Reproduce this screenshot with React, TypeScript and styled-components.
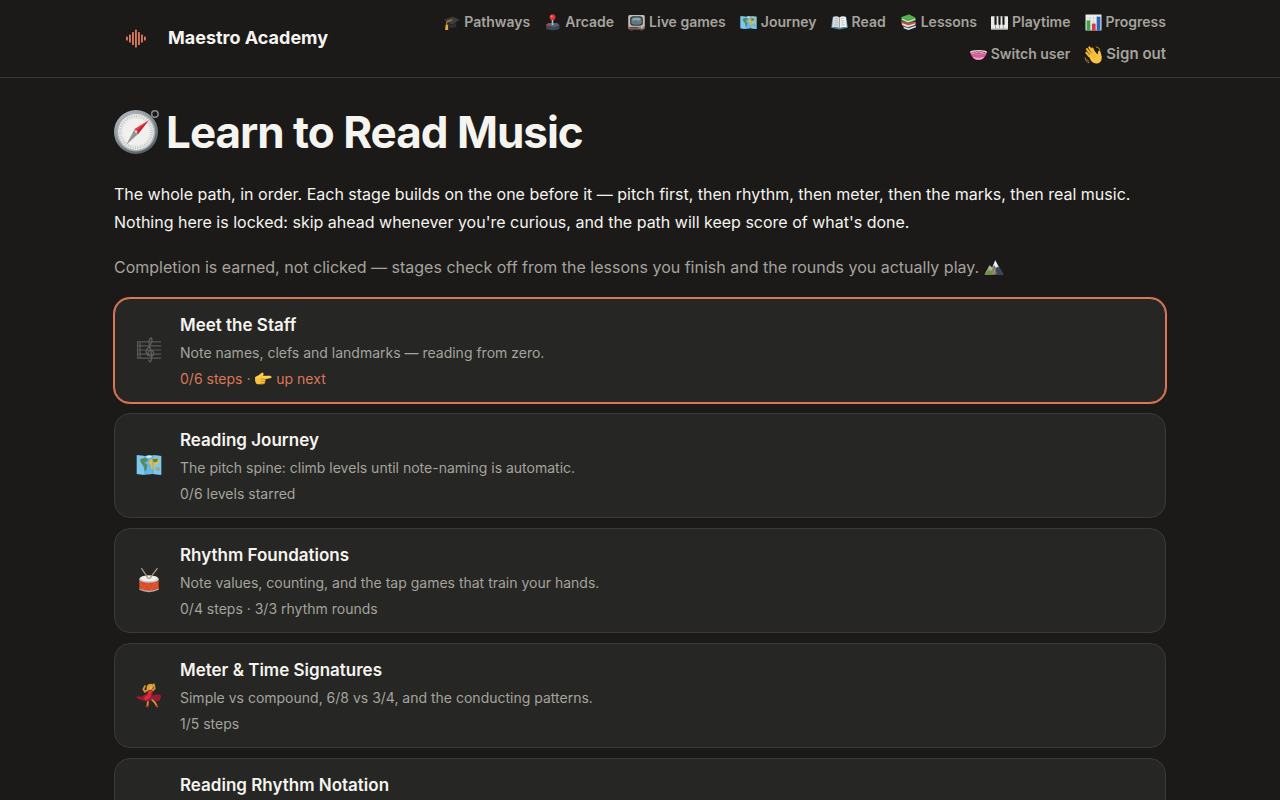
import type { ReactNode } from "react";
import styled, { createGlobalStyle } from "styled-components";

const GlobalStyle = createGlobalStyle`
  *, *::before, *::after { box-sizing: border-box; }
  body {
    margin: 0;
    background: #1b1a19;
    color: #f5f4ef;
    font-family: Inter, "Liberation Sans", sans-serif;
    font-size: 16px;
    line-height: 28px;
  }
  h1, h2, p, ul { margin: 0; padding: 0; }
  ul { list-style: none; }
`;

const Header = styled.header`
  border-bottom: 1px solid #3b3a38;
`;

const HeaderInner = styled.div`
  display: flex;
  align-items: center;
  justify-content: space-between;
  gap: 24px;
  max-width: 1100px;
  margin: 0 auto;
  padding: 6px 24px 7px;
`;

const Brand = styled.a`
  display: flex;
  align-items: center;
  flex-shrink: 0;
  gap: 10px;
  color: inherit;
  font-size: 18px;
  font-weight: 700;
  text-decoration: none;
`;

const Nav = styled.nav`
  display: flex;
  flex-wrap: wrap;
  justify-content: flex-end;
  column-gap: 14px;
`;

const NavLink = styled.a`
  display: flex;
  align-items: center;
  gap: 4px;
  color: #a5a39c;
  font-size: 14px;
  font-weight: 600;
  line-height: 32px;
  text-decoration: none;
`;

const NavButton = styled.button`
  display: flex;
  align-items: center;
  gap: 3px;
  padding: 0;
  border: 0;
  background: none;
  color: #a5a39c;
  font-family: inherit;
  font-size: 15px;
  font-weight: 600;
  line-height: 32px;
  cursor: pointer;
`;

const Main = styled.main`
  max-width: 1100px;
  margin: 0 auto;
  padding: 28px 24px 48px;
`;

const Title = styled.h1`
  display: flex;
  align-items: center;
  gap: 7px;
  margin-bottom: 22px;
  font-size: 44px;
  font-weight: 700;
  line-height: 52px;
  letter-spacing: -1px;
`;

const Lead = styled.p`
  margin-bottom: 17px;
`;

const Note = styled.p`
  margin-bottom: 17px;
  color: #a5a39c;
`;

const StageList = styled.ul`
  display: flex;
  flex-direction: column;
  gap: 10px;
`;

const StageCard = styled.a<{ $next?: boolean }>`
  display: flex;
  align-items: center;
  gap: 17px;
  min-height: 105px;
  padding: 12px 20px 11px;
  border: 1px solid ${(p) => (p.$next ? "#d97757" : "#3b3a38")};
  border-radius: 16px;
  box-shadow: ${(p) => (p.$next ? "0 0 0 1px #d97757" : "none")};
  background: #262624;
  color: inherit;
  text-decoration: none;
`;

const StageIcon = styled.span`
  display: flex;
  justify-content: center;
  width: 28px;
  padding-bottom: 2px;
`;

const StageBody = styled.div`
  display: flex;
  flex: 1;
  flex-direction: column;
  align-self: flex-start;
  gap: 2px;
`;

const StageTitle = styled.h2`
  font-size: 17px;
  font-weight: 600;
  line-height: 28px;
`;

const StageText = styled.p<{ $accent?: boolean }>`
  color: ${(p) => (p.$accent ? "#d97757" : "#a5a39c")};
  font-size: 14px;
  line-height: 24px;
`;

const Glyph = styled.svg`
  flex-shrink: 0;
`;

const InlineGlyph = styled(Glyph)`
  vertical-align: text-bottom;
`;

type IconProps = { size: number };

function Logo() {
  const bars = [4, 8, 13, 18, 13, 8, 4];
  return (
    <Glyph width="44" height="44" viewBox="0 0 44 44" aria-hidden="true">
      {bars.map((h, i) => (
        <rect key={i} x={12 + i * 3} y={22.5 - h / 2} width="1.9" height={h} rx="0.6" fill="#d97757" />
      ))}
    </Glyph>
  );
}

function Cap({ size }: IconProps) {
  return (
    <Glyph width={size} height={size} viewBox="0 0 32 32" aria-hidden="true">
      <path d="M8 15v9q8 5 17 0v-9z" fill="#30302f" />
      <path d="M2 11 18 5l13 6-15 9z" fill="#3f3f3d" />
      <path d="m2 11 14 9 15-9v1.500L16 22 2 12.500z" fill="#242423" />
      <path d="m17 11-10 4v7" fill="none" stroke="#b98424" strokeWidth="2" />
      <path d="M5 20h4l1 10H4z" fill="#e8a83b" />
    </Glyph>
  );
}

function Joystick({ size }: IconProps) {
  return (
    <Glyph width={size} height={size} viewBox="0 0 32 32" aria-hidden="true">
      <path d="M4 20 8 17h17l4 4v7q-12 5-25 0z" fill="#3d4654" />
      <path d="M4 20 8 17h17l4 4-12 4z" fill="#56606f" />
      <path d="M14.500 9h3v12h-3z" fill="#b9bdc2" />
      <circle cx="16" cy="6" r="5.500" fill="#e1323d" />
      <circle cx="14.500" cy="4.500" r="1.800" fill="#ff8d8d" />
      <ellipse cx="8" cy="20.500" rx="3" ry="1.600" fill="#d8343c" />
    </Glyph>
  );
}

function Television({ size }: IconProps) {
  return (
    <Glyph width={size} height={size} viewBox="0 0 32 32" aria-hidden="true">
      <rect x="0" y="2" width="32" height="27" rx="3" fill="#8b7567" />
      <rect x="1" y="2" width="30" height="22" rx="3" fill="#c2beb8" />
      <rect x="4" y="4" width="24" height="18" rx="6" fill="#303a3d" />
      <rect x="6" y="6" width="20" height="14" rx="6" fill="#5f7a82" />
      <path d="M8 9q8-4 16 0l-3 4q-6-3-12 0z" fill="#8fa6ab" />
      <path d="M4 26h15" stroke="#4d3e36" strokeWidth="2" />
      <circle cx="26" cy="26" r="1.500" fill="#e2ddd5" />
      <path d="M4 29h5v2H4zm19 0h5v2h-5z" fill="#665148" />
    </Glyph>
  );
}

function WorldMap({ size }: IconProps) {
  return (
    <Glyph width={size} height={size} viewBox="0 0 32 32" aria-hidden="true">
      <path d="m1 4 10 1 10-1 10 1v23l-10-1-10 1-10-1z" fill="#65b9e8" />
      <path d="m1 4 10 1v23L1 27zm20 0 10 1v23l-10-1z" fill="#7cc8ef" />
      <path d="m5 9 5-2 5 2-2 3-3 1 4 3-1 6-2 2-2-7-3-4z" fill="#5e8a50" />
      <path d="m17 11 3-3 5-1 4 3-2 4-3 1-2 7-3-1-1-6-3-1z" fill="#e7bd45" />
      <path d="m20 9 7-1-1 4-4 1z" fill="#52864e" />
      <path d="m24 20 4-1 1 3-3 1zM11 5v23M21 4v23" fill="#dfab3b" stroke="#4c91bd" strokeWidth="0.600" />
      <path d="m12 5 4-1 4 1-2 2h-4z" fill="#dcebea" />
    </Glyph>
  );
}

function OpenBook({ size }: IconProps) {
  return (
    <Glyph width={size} height={size} viewBox="0 0 32 32" aria-hidden="true">
      <path d="m3 6-3 20 15 3h2l15-3-3-20z" fill="#447b98" />
      <path d="M4 5q9-2 12 2v20q-5-4-14-2z" fill="#d7dadc" />
      <path d="M28 5q-9-2-12 2v20q5-4 14-2z" fill="#f1f1ee" />
      <path d="m8 8 5 1m-6 3 6 1m-6 3 6 1m-7 3 7 1m6-12 5-1m-5 5 6-1m-6 5 6-1m-6 5 7-1" stroke="#a8adaf" strokeWidth="1.200" />
      <path d="M16 7v20" stroke="#788286" />
    </Glyph>
  );
}

function Books({ size }: IconProps) {
  return (
    <Glyph width={size} height={size} viewBox="0 0 32 32" aria-hidden="true">
      <path d="m6 22 16-4 9 5-16 7-9-3z" fill="#31536a" />
      <path d="m7 24 9 3 14-5v3l-14 5-9-3z" fill="#dbe0df" />
      <path d="m2 14 17-2 11 5-15 7-12-4z" fill="#bc3134" />
      <path d="m4 16 12 4 13-4v4l-14 5-11-4z" fill="#e5d9ce" />
      <path d="m3 14 13 4 14-4v3l-14 4-13-4z" fill="#d64443" />
      <path d="M2 6 17 1l12 6v6l-14 5L2 12z" fill="#298e3c" />
      <path d="M2 6 17 1l12 6-14 5z" fill="#55af4e" />
      <path d="m4 8 11 5 14-5v3l-14 5-11-5z" fill="#d8ddce" />
    </Glyph>
  );
}

function Piano({ size }: IconProps) {
  return (
    <Glyph width={size} height={size} viewBox="0 0 32 32" aria-hidden="true">
      <rect x="0" y="4" width="32" height="25" rx="1" fill="#ecebea" />
      <path d="M8.500 4v25M16 4v25m7.500-25v25" stroke="#666" strokeWidth="1" />
      <path d="M6.500 4h4v16h-4zm7.500 0h4v16h-4zm7.500 0h4v16h-4z" fill="#171717" />
      <path d="M0 27h32v2H0z" fill="#b9b9b8" />
    </Glyph>
  );
}

function BarChart({ size }: IconProps) {
  return (
    <Glyph width={size} height={size} viewBox="0 0 32 32" aria-hidden="true">
      <path d="M1 1h30v30H1z" fill="#f0f1ed" />
      <path d="M1 8h30M1 15h30M1 22h30M9 1v30M16 1v30M23 1v30" stroke="#c1d0d5" />
      <path d="M3 12h7v19H3z" fill="#3da34a" />
      <path d="M13 18h7v13h-7z" fill="#d9393d" />
      <path d="M22 5h7v26h-7z" fill="#2d63ba" />
    </Glyph>
  );
}

function Bowl({ size }: IconProps) {
  return (
    <Glyph width={size} height={size} viewBox="0 0 32 32" aria-hidden="true">
      <path d="M0 11q3 15 16 15t16-15z" fill="#e0589a" />
      <path d="M5 20q11 4 22 0-4 6-11 6T5 20z" fill="#f2a3c8" />
      <ellipse cx="16" cy="11.500" rx="16" ry="4" fill="#f0d3de" />
      <ellipse cx="16" cy="12" rx="13" ry="2.400" fill="#8e3158" />
      <path d="m5 12 4-1 4 1 4-1 4 1 5-1" fill="none" stroke="#e8dddd" strokeWidth="1.800" />
    </Glyph>
  );
}

function Wave({ size }: IconProps) {
  return (
    <Glyph width={size} height={size} viewBox="0 0 32 32" aria-hidden="true">
      <path d="M9 19 4 13m8 3L5 7m10 7L9 4m9 10-4-8" fill="none" stroke="#f6b72f" strokeWidth="3.600" strokeLinecap="round" />
      <path d="m8 18 10-7 5 5 1-6q3-2 4 2l2 8q0 10-8 11-6 1-10-4z" fill="#f8c33f" />
      <path d="M20 3q6 1 7 6M2 21q0 7 7 9m-4-6q1 2 3 3" fill="none" stroke="#d2922d" strokeWidth="1.500" />
      <path d="m12 17 6 6m-3-9 5 6" fill="none" stroke="#dba02c" />
    </Glyph>
  );
}

function Compass({ size }: IconProps) {
  return (
    <Glyph width={size} height={size} viewBox="0 0 44 44" aria-hidden="true">
      <defs>
        <linearGradient id="compass-rim" x2="0.6" y2="1">
          <stop stopColor="#bcc2c7" />
          <stop offset="0.500" stopColor="#899199" />
          <stop offset="1" stopColor="#596169" />
        </linearGradient>
      </defs>
      <circle cx="40" cy="4" r="3.200" fill="none" stroke="#858c92" strokeWidth="1.500" />
      <circle cx="21.500" cy="21.500" r="21.500" fill="url(#compass-rim)" />
      <circle cx="21.500" cy="21.500" r="19" fill="#a7adb2" />
      <circle cx="21.500" cy="21.500" r="17.500" fill="#e8e8e6" />
      <circle cx="21.500" cy="21.500" r="15.500" fill="none" stroke="#bfc1c1" strokeWidth="2.500" strokeDasharray="0.800 1.630" />
      <circle cx="21.500" cy="21.500" r="13" fill="#f0f0ed" />
      <path d="m20 19 3.500 4.500L12 34z" fill="#8f9396" />
      <path d="M34 10 20 18.500l3.500 5z" fill="#ee3940" />
      <path d="M34 10 21.500 21l2 2.500z" fill="#b92730" />
      <circle cx="21.700" cy="21.300" r="1.200" fill="#d8dbdc" />
    </Glyph>
  );
}

function Mountain({ size }: IconProps) {
  return (
    <InlineGlyph width={size} height={size} viewBox="0 0 32 32" aria-hidden="true">
      <path d="M1 28 9 13l5 4 4-12 13 23z" fill="#697783" />
      <path d="m18 5-7 23H1L9 13l4 4z" fill="#b3afa1" />
      <path d="m18 5-4 11 3-3 2 5 3-3 2 2z" fill="#eef4f7" />
      <path d="m1 28 7-9 2 4 6-5-2 10z" fill="#68943b" />
      <path d="m17 18 4 10h10l-7-12z" fill="#35495a" />
      <path d="m11 28 8-13-1 13z" fill="#a3846c" />
    </InlineGlyph>
  );
}

function PointRight({ size }: IconProps) {
  return (
    <InlineGlyph width={size} height={size} viewBox="0 0 32 32" aria-hidden="true">
      <path d="M2 14q6-2 11-7 4-2 4 2l-2 3h14q3 1 2 4l-11 2q1 8-4 9H6q-5-2-4-13z" fill="#f8c33f" />
      <path d="M12 18h7q2 2 0 4h-7m6 0q2 2 0 4h-6" fill="none" stroke="#ce8b25" strokeWidth="1.500" />
      <path d="m3 16 9-4 5-2m-2 4h13" stroke="#ffe078" strokeWidth="1.500" fill="none" />
    </InlineGlyph>
  );
}

function Score({ size }: IconProps) {
  return (
    <Glyph width={size} height={size} viewBox="0 0 32 32" aria-hidden="true">
      <path d="M1 6h30M1 11h30M1 16h30M1 21h30M1 26h30M2 6v20m3-20v20" fill="none" stroke="#595957" strokeWidth="1.500" />
      <path d="M18 31q-3-1-2-3m2 2q2-2 1-9L16 7q0-5 3-6 2 3-2 10-7 6-3 11 7 4 8-2-1-5-6-3-2 2-1 4" fill="none" stroke="#60605e" strokeWidth="1.500" />
    </Glyph>
  );
}

function Drum({ size }: IconProps) {
  return (
    <Glyph width={size} height={size} viewBox="0 0 32 32" aria-hidden="true">
      <path d="M4 15v11q12 7 24 0V15z" fill="#d84a28" />
      <path d="m5 18 4 10 5-9 5 9 4-9 4 8" fill="none" stroke="#e8683f" strokeWidth="0.800" />
      <path d="M4 26q12 6 24 0v2q-12 6-24 0z" fill="#b8a498" />
      <ellipse cx="16" cy="15" rx="12" ry="4.500" fill="#b9c5c8" />
      <ellipse cx="16" cy="14" rx="11" ry="3.600" fill="#eeeeea" />
      <path d="m7 2 8 12M26 2l-9 12" stroke="#a8977c" strokeWidth="1.600" strokeLinecap="round" />
    </Glyph>
  );
}

function Dancer({ size }: IconProps) {
  return (
    <Glyph width={size} height={size} viewBox="0 0 32 32" aria-hidden="true">
      <path d="m14 10-3 2-2-3 2-4m9 6 3-3-1-5M15 21l-1 9m5-9 4 4 3 5" fill="none" stroke="#d7962e" strokeWidth="2.200" strokeLinecap="round" strokeLinejoin="round" />
      <path d="m15 10 6 1-1 6q8-4 11 0l-2 6-5 1-4-3-4 3-7-1-6-2-3-2q2-2 7-1l6-4z" fill="#9c1b33" />
      <path d="m15 10 5 1-3 9-6 3-1-4 5-4z" fill="#d62f3f" />
      <path d="m12 30 3 0m9 0 3-1" stroke="#ca203a" strokeWidth="1.600" />
      <circle cx="17.500" cy="6.500" r="3.200" fill="#eeb047" />
      <path d="M13 10q-1-8 5-8 4 0 4 4l-4-1-2 5z" fill="#d9a12f" />
    </Glyph>
  );
}

const navItems = [
  { label: "Pathways", Icon: Cap },
  { label: "Arcade", Icon: Joystick },
  { label: "Live games", Icon: Television },
  { label: "Journey", Icon: WorldMap },
  { label: "Read", Icon: OpenBook },
  { label: "Lessons", Icon: Books },
  { label: "Playtime", Icon: Piano },
  { label: "Progress", Icon: BarChart },
  { label: "Switch user", Icon: Bowl },
];

type Stage = { title: string; text?: string; progress?: ReactNode; icon?: ReactNode; next?: boolean };

const stages: Stage[] = [
  {
    title: "Meet the Staff",
    text: "Note names, clefs and landmarks — reading from zero.",
    progress: <>0/6 steps · <PointRight size={18} /> up next</>,
    icon: <Score size={26} />,
    next: true,
  },
  {
    title: "Reading Journey",
    text: "The pitch spine: climb levels until note-naming is automatic.",
    progress: "0/6 levels starred",
    icon: <WorldMap size={26} />,
  },
  {
    title: "Rhythm Foundations",
    text: "Note values, counting, and the tap games that train your hands.",
    progress: "0/4 steps · 3/3 rhythm rounds",
    icon: <Drum size={26} />,
  },
  {
    title: "Meter & Time Signatures",
    text: "Simple vs compound, 6/8 vs 3/4, and the conducting patterns.",
    progress: "1/5 steps",
    icon: <Dancer size={26} />,
  },
  { title: "Reading Rhythm Notation" },
];

export default function App() {
  return (
    <>
      <GlobalStyle />
      <Header>
        <HeaderInner>
          <Brand href="#">
            <Logo />
            Maestro Academy
          </Brand>
          <Nav>
            {navItems.map(({ label, Icon }) => (
              <NavLink key={label} href="#">
                <Icon size={17} />
                {label}
              </NavLink>
            ))}
            <NavButton type="button">
              <Wave size={19} />
              Sign out
            </NavButton>
          </Nav>
        </HeaderInner>
      </Header>
      <Main>
        <Title>
          <Compass size={45} />
          Learn to Read Music
        </Title>
        <Lead>
          The whole path, in order. Each stage builds on the one before it — pitch first, then rhythm, then meter, then
          the marks, then real music. Nothing here is locked: skip ahead whenever you're curious, and the path will keep
          score of what's done.
        </Lead>
        <Note>
          Completion is earned, not clicked — stages check off from the lessons you finish and the rounds you actually
          play. <Mountain size={20} />
        </Note>
        <StageList>
          {stages.map((stage) => (
            <li key={stage.title}>
              <StageCard href="#" $next={stage.next}>
                <StageIcon>{stage.icon}</StageIcon>
                <StageBody>
                  <StageTitle>{stage.title}</StageTitle>
                  {stage.text && <StageText>{stage.text}</StageText>}
                  {stage.progress && <StageText $accent={stage.next}>{stage.progress}</StageText>}
                </StageBody>
              </StageCard>
            </li>
          ))}
        </StageList>
      </Main>
    </>
  );
}
